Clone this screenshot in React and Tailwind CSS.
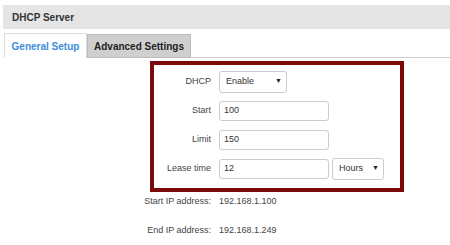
import React from 'react';

const font = { fontFamily: '"Liberation Sans", Arial, sans-serif' };

function Field({ label, children }) {
  return (
    <div className="flex h-[29px] items-center">
      <div className="w-[58px] pr-[1px] text-right text-[9px] text-[#444]">{label}</div>
      <div className="ml-[7px] flex items-center gap-[3px]">{children}</div>
    </div>
  );
}

function TextBox({ value, width = 'w-[110px]' }) {
  return (
    <div className={`${width} flex h-[20px] items-center rounded-[3px] border border-[#ccc] bg-white pl-[4px] text-[9px] text-[#333]`}>
      {value}
    </div>
  );
}

function SelectBox({ value, width }) {
  return (
    <div className={`${width} flex h-[22px] items-center justify-between rounded-[3px] border border-[#ccc] bg-white pl-[6px] pr-[4px] text-[9px] text-[#333]`}>
      <span>{value}</span>
      <span className="text-[7px] text-[#222]">▼</span>
    </div>
  );
}

export default function App() {
  return (
    <div className="h-[245px] w-[450px] overflow-hidden bg-white" style={font}>
      <div className="ml-[3px] mt-[5px] flex h-[24px] items-center bg-[#e5e5e5] pl-[9px] text-[10px] font-bold text-[#333]">
        DHCP Server
      </div>

      <div className="ml-[4px] mt-[4px] flex h-[25px] items-end">
        <div className="flex h-[25px] w-[83px] items-center justify-center border border-b-0 border-[#ddd] bg-white text-[10px] font-bold text-[#3c8ddb]">
          General Setup
        </div>
        <div className="flex h-[24px] w-[104px] items-center justify-center border border-[#bbb] bg-[#cfcfcf] text-[10px] font-bold text-[#222]">
          Advanced Settings
        </div>
        <div className="flex-1 border-b border-[#ccc]" />
      </div>

      <div className="ml-[150px] mt-[3px] h-[131px] w-[254px] border-4 border-[#7d0a0a] pt-[2px]">
        <Field label="DHCP">
          <SelectBox value="Enable" width="w-[68px]" />
        </Field>
        <Field label="Start">
          <TextBox value="100" />
        </Field>
        <Field label="Limit">
          <TextBox value="150" />
        </Field>
        <Field label="Lease time">
          <TextBox value="12" />
          <SelectBox value="Hours" width="w-[52px]" />
        </Field>
      </div>

      <div className="mt-[2px] flex h-[15px] items-center text-[9px] text-[#444]">
        <div className="w-[212px] pr-[1px] text-right">Start IP address:</div>
        <div className="ml-[7px]">192.168.1.100</div>
      </div>
      <div className="mt-[14px] flex h-[15px] items-center text-[9px] text-[#444]">
        <div className="w-[212px] pr-[1px] text-right">End IP address:</div>
        <div className="ml-[7px]">192.168.1.249</div>
      </div>
    </div>
  );
}
